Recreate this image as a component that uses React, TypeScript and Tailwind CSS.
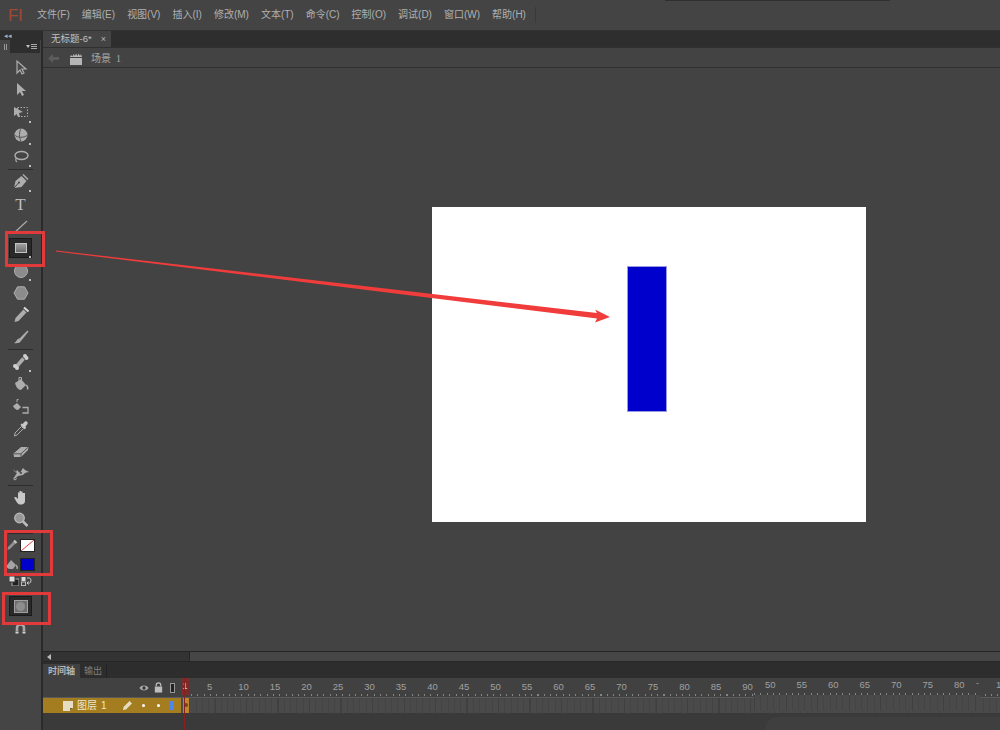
import type { ReactNode } from 'react'

const menus = ['文件(F)', '编辑(E)', '视图(V)', '插入(I)', '修改(M)', '文本(T)', '命令(C)', '控制(O)', '调试(D)', '窗口(W)', '帮助(H)']
const frames = [10, 15, 20, 25, 30, 35, 40, 45, 50, 55, 60, 65, 70, 75, 80, 85, 90]
const framesTwo = [50, 55, 60, 65, 70, 75, 80]

const Icon = ({ children }: { children: ReactNode }) => (
  <svg width="20" height="20" viewBox="0 0 20 20" fill="none">{children}</svg>
)

const Tool = ({ children, corner }: { children: ReactNode; corner?: boolean }) => (
  <div className="relative flex h-[22.2px] items-center justify-center">
    {children}
    {corner && <span className="absolute bottom-[1px] left-[29px] h-[2px] w-[2px] bg-[#bdbdbd]" />}
  </div>
)

const Sep = () => (
  <div className="flex h-[2.8px] items-center justify-center">
    <div className="h-[1px] w-[25px] bg-[#2c2c2c]" />
  </div>
)

const c = '#adadad'

const Toolbar = () => (
  <div className="flex w-[41px] flex-col pt-[2px]">
    <Tool>
      <Icon>
        <path d="M6 3v12l3-3 2 4 2-1-2-4h4z" stroke={c} strokeWidth="1.200" fill="#4a4a4a" />
      </Icon>
    </Tool>
    <Tool>
      <Icon>
        <path d="M6 3v12l3-3 2 4 2-1-2-4h4z" fill={c} />
      </Icon>
    </Tool>
    <Tool corner>
      <Icon>
        <path d="M3 5l9 5-4 1 1 4-2 0-1-3-3 2z" fill={c} />
        <rect x="6.500" y="5.500" width="10" height="9" stroke={c} strokeDasharray="1.500 1.500" />
      </Icon>
    </Tool>
    <Tool corner>
      <Icon>
        <circle cx="10" cy="10" r="6.500" fill={c} />
        <path d="M3.500 10c3 3 10 3 13 0M10 3.500c-2 3-2 9 0 13" stroke="#555" />
      </Icon>
    </Tool>
    <Tool corner>
      <Icon>
        <ellipse cx="10.500" cy="8.500" rx="6.500" ry="4" stroke={c} strokeWidth="1.400" />
        <path d="M5.500 11c-1 1-1 3 .5 4" stroke={c} strokeWidth="1.200" />
      </Icon>
    </Tool>
    <Sep />
    <Tool corner>
      <Icon>
        <path d="M3 16l1.500-7 6-5 5 5-5 6z" fill={c} />
        <path d="M3 16l4.500-5" stroke="#444" />
        <circle cx="8" cy="10.500" r="1" fill="#444" />
        <path d="M12 2.500l5 5" stroke={c} strokeWidth="1.500" />
      </Icon>
    </Tool>
    <Tool>
      <span className="font-[family-name:'Liberation_Serif',serif] text-[17px] leading-none text-[#bdbdbd]">T</span>
    </Tool>
    <Tool>
      <Icon>
        <path d="M3 17L16 5" stroke={c} strokeWidth="1.100" />
      </Icon>
    </Tool>
    <Tool corner>
      <div className="flex h-[20px] w-[23px] items-center justify-center border border-[#1b1b1b] bg-[#2a2a2a]">
        <div className="h-[10px] w-[12px] border border-[#c4c4c4] bg-gradient-to-b from-[#a0a0a0] to-[#6c6c6c]" />
      </div>
    </Tool>
    <Tool corner>
      <Icon>
        <circle cx="10" cy="10" r="6.500" fill="#8c8c8c" stroke={c} />
      </Icon>
    </Tool>
    <Tool>
      <Icon>
        <path d="M6.500 3.800h7l3.500 6.200-3.500 6.200h-7L3 10z" fill="#8c8c8c" stroke={c} />
      </Icon>
    </Tool>
    <Tool>
      <Icon>
        <path d="M3.500 17l1-4 8-8.500 3 3-8 8.500z" fill={c} />
        <path d="M13 2.500l4.500 4" stroke="#dcdcdc" strokeWidth="2" />
      </Icon>
    </Tool>
    <Tool>
      <Icon>
        <path d="M8 12L16.500 3.500l1 1L10 14z" fill={c} />
        <path d="M3 16c3 .5 6 0 7-2l-2-2.500c-2 0-2 3-5 4.500z" fill={c} />
      </Icon>
    </Tool>
    <Sep />
    <Tool corner>
      <Icon>
        <path d="M5.500 14.500l7-8" stroke={c} strokeWidth="3.500" />
        <circle cx="14" cy="4" r="2" fill="#d0d0d0" />
        <circle cx="15.500" cy="6" r="2" fill="#d0d0d0" />
        <circle cx="4" cy="14" r="2" fill="#d0d0d0" />
        <circle cx="6" cy="16" r="2" fill="#d0d0d0" />
      </Icon>
    </Tool>
    <Tool>
      <Icon>
        <path d="M4 9l6-4 5 6-5 5c-3 0-5-3-6-7z" fill={c} />
        <path d="M8 7V3.500h2.500V7" stroke={c} />
        <path d="M15 11c1.500 1 2 3 1.500 4.500" stroke={c} strokeWidth="1.500" />
      </Icon>
    </Tool>
    <Tool>
      <Icon>
        <path d="M2 9l4-3 4 4-3 3c-2 0-4-2-5-4z" fill={c} />
        <path d="M6 5V2.500h1.500" stroke={c} />
        <path d="M11.500 10.500h5.500v5.500h-5.500" stroke={c} strokeWidth="1.300" />
      </Icon>
    </Tool>
    <Tool>
      <Icon>
        <path d="M3.500 17l.5-3 6.500-6.500 2 2L6 16z" stroke={c} />
        <path d="M9.500 6l4.500 4.500 1-2-.5-1 2-2.500c1-1.500-1-3.500-2.500-2.500L11.500 5l-1-.5z" fill="#c8c8c8" />
      </Icon>
    </Tool>
    <Tool>
      <Icon>
        <path d="M2.500 12.500L10 6h7.500l-.5 3-7 7H3z" fill={c} />
        <path d="M3 12.800h7l7-6.500M10 12.800V16" stroke="#555" />
      </Icon>
    </Tool>
    <Tool>
      <Icon>
        <path d="M2 6l3 3 1-2 3 3 3-5 2 2 4 2c-2 0-3 1-4 1l-2 2-5 1-4 3 1-3 2-3-2-1z" fill={c} />
        <circle cx="4" cy="15.500" r="1.300" stroke={c} />
        <circle cx="10" cy="10" r="1" fill="#444" />
      </Icon>
    </Tool>
    <Sep />
    <Tool>
      <Icon>
        <path d="M3 9.500l2-.5 2 2V4.500h1.500V9V3h1.500v6V3.500h1.500V9.500V5H14v8c0 2-1.500 3.500-3.500 3.500H9c-2 0-3-2-6-7z" fill="#c8c8c8" />
      </Icon>
    </Tool>
    <Tool>
      <Icon>
        <circle cx="8.500" cy="8" r="4.800" fill="#979797" stroke="#bdbdbd" strokeWidth="1.200" />
        <path d="M12 11.500l4.500 4.500" stroke="#bdbdbd" strokeWidth="2.500" />
      </Icon>
    </Tool>
    <div className="mt-[2px] flex h-[1px] justify-center">
      <div className="h-[1px] w-[25px] bg-[#2c2c2c]" />
    </div>
    <div className="mt-[3px] flex h-[16px] items-center gap-[1px] pl-[5px]">
      <svg width="14" height="14" viewBox="0 0 14 14" fill="none">
        <path d="M2.500 12l.5-3 6-6 2 2-6 6z" fill="#909090" />
        <path d="M9 2.500l2.500 2.500" stroke="#c8c8c8" strokeWidth="2" />
      </svg>
      <div className="relative h-[13px] w-[15px] overflow-hidden border border-[#222] bg-white">
        <svg className="absolute inset-0 h-full w-full" viewBox="0 0 15 13" preserveAspectRatio="none">
          <path d="M0 13L15 0" stroke="#e02020" strokeWidth="1" />
        </svg>
      </div>
    </div>
    <div className="mt-[3px] flex h-[16px] items-center gap-[1px] pl-[5px]">
      <svg width="14" height="14" viewBox="0 0 14 14" fill="none">
        <path d="M1.500 9L6 3l5 5-3 4H5c-2 0-3-1-3.500-3z" fill="#a4a4a4" />
        <path d="M11 8c1 1 1.500 2.500 1 4" stroke="#a4a4a4" strokeWidth="1.500" />
      </svg>
      <div className="h-[13px] w-[15px] border border-[#222] bg-[#0000cc]" />
    </div>
    <div className="mt-[3px] flex h-[12px] items-center justify-center gap-[2px] pr-[1px]">
      <svg width="10" height="10" viewBox="0 0 10 10">
        <rect x="3" y="3" width="7" height="7" fill="#222" stroke="#aaa" />
        <rect x="0" y="0" width="6" height="6" fill="#ddd" stroke="#333" />
      </svg>
      <svg width="11" height="10" viewBox="0 0 11 10" fill="none">
        <rect x="0.500" y="1" width="4" height="4" fill="#ddd" />
        <rect x="0.500" y="6" width="4" height="3.500" stroke="#bbb" />
        <path d="M6 2h2.500c2 0 2 5 0 5H6M7.500 5.500L6 7l1.500 1.500" stroke="#ccc" />
      </svg>
    </div>
    <div className="mt-[9px] flex justify-center">
      <div className="flex h-[20px] w-[23px] items-center justify-center border border-[#1b1b1b] bg-[#2a2a2a]">
        <div className="flex h-[13px] w-[14px] items-center justify-center border border-[#a0a0a0] bg-[#6e6e6e]">
          <div className="h-[9px] w-[9px] rounded-full bg-[#8e8e8e]" />
        </div>
      </div>
    </div>
    <div className="mt-[6px] flex justify-center">
      <svg width="13" height="12" viewBox="0 0 13 12" fill="none">
        <path d="M3 9V6a3.500 3.500 0 017 0V9" stroke="#a8a8a8" strokeWidth="2.600" />
        <path d="M1.500 10.500h3M8.500 10.500h3" stroke="#d4d4d4" strokeWidth="1.800" />
      </svg>
    </div>
  </div>
)

const TimelineRuler = () => (
  <div className="relative h-[19px] bg-[#414141]">
    <div className="absolute left-[96px] top-[4px] flex items-center">
      <svg width="10" height="8" viewBox="0 0 12 9">
        <path d="M0.500 4.500C3 .5 9 .5 11.500 4.500 9 8.500 3 8.500.5 4.500z" fill="#b0b0b0" />
        <circle cx="6" cy="4.500" r="2" fill="#333" />
      </svg>
      <svg className="ml-[5px]" width="9" height="11" viewBox="0 0 9 12" fill="none">
        <path d="M2 5V3.500a2.500 2.500 0 015 0V5" stroke="#bdbdbd" strokeWidth="1.300" />
        <rect x="0.500" y="5" width="8" height="6.500" fill="#bdbdbd" />
      </svg>
      <div className="ml-[7px] h-[10px] w-[5px] border border-[#999] bg-[#222]" />
    </div>
    {/* playhead label */}
    <div className="absolute left-[138px] top-0 flex h-[17px] w-[8px] items-center justify-center bg-[#7c2b2b] text-[9px] text-[#d0d0d0]">1</div>
    <span className="absolute left-[164px] top-[2px] text-[9.500px] leading-[14px] text-[#a0a0a0]">5</span>
    <div className="absolute left-[184.750px] top-[2px] flex text-[9.500px] leading-[14px] text-[#a0a0a0]">
      {frames.map((f) => (
        <span key={f} className="w-[31.500px] text-center">{f}</span>
      ))}
    </div>
    <div className="absolute bottom-[1px] left-[148px] right-0 h-[2px] bg-[repeating-linear-gradient(90deg,#858585_0,#858585_1px,transparent_1px,transparent_6.300px)]" />
  </div>
)

const frameCells =
  'bg-[repeating-linear-gradient(90deg,#404040_0,#404040_1px,transparent_1px,transparent_31.500px),repeating-linear-gradient(90deg,#444444_0,#444444_1px,#4a4a4a_1px,#4a4a4a_6.300px)]'

const LayerRow = () => (
  <div className="flex h-[16px] border-t border-[#5a5a5a]">
    <div className="relative flex w-[138px] items-center bg-[#a37d1f] pl-[20px]">
      <svg width="10" height="10" viewBox="0 0 10 10">
        <path d="M0 0h10v7l-3 3H0z" fill="#e6dcc2" />
        <path d="M7 10V7h3z" fill="#7d6420" />
      </svg>
      <span className="ml-[4px] text-[10px] leading-none text-[#efe6cf]">图层</span>
      <span className="ml-[4px] text-[10px] leading-none text-[#efe6cf]">1</span>
      <svg className="absolute left-[79px] top-[2px]" width="11" height="11" viewBox="0 0 11 11">
        <path d="M1 10l.5-3 6-6 2.500 2.500-6 6z" fill="#e6dcc2" />
      </svg>
      <span className="absolute left-[99px] top-[6px] h-[3px] w-[3px] rounded-full bg-white" />
      <span className="absolute left-[114px] top-[6px] h-[3px] w-[3px] rounded-full bg-white" />
      <span className="absolute left-[127px] top-[3px] h-[9px] w-[4px] bg-[#4f86e8]" />
    </div>
    <div className="w-[2px] bg-[#4c4c4c]" />
    <div className={`relative flex-1 ${frameCells}`}>
      <div className="absolute left-0 top-0 h-full w-[6px] bg-[#c2852a]">
        <span className="absolute left-[1px] top-[5px] h-[4px] w-[4px] rounded-full bg-[#6a4a1a]" />
      </div>
    </div>
  </div>
)

export default function App() {
  return (
    <div className="relative flex h-[730px] w-[1000px] flex-col overflow-hidden bg-[#434343] font-[family-name:'Liberation_Sans','Noto_Sans_CJK_SC',sans-serif]">
      {/* top menu */}
      <div className="flex h-[31px] shrink-0 items-center border-b border-[#333] bg-[#444444]">
        <span className="ml-[8px] w-[29px] font-[family-name:'Liberation_Sans',sans-serif] text-[17px] leading-none text-[#a04a35]">Fl</span>
        <div className="flex gap-[12px]">
          {menus.map((m) => (
            <span key={m} className="text-[10px] leading-none text-[#b0b0b0]">{m}</span>
          ))}
        </div>
        <div className="ml-[9px] h-[16px] w-[1px] bg-[#393939]" />
      </div>

      <div className="flex min-h-0 flex-1">
        {/* tools */}
        <div className="flex w-[43px] shrink-0 flex-col border-r-2 border-[#2a2a2a] bg-[#454545]">
          <div className="flex h-[9px] items-center bg-[#2e2e2e] pl-[4px]">
            <span className="text-[7px] leading-none text-[#b0b0b0]">◂◂</span>
          </div>
          <div className="flex h-[15px] items-start">
            <div className="flex h-[10px] w-[10px] items-center justify-center">
              <div className="mt-[3px] h-[6px] w-[3px] border-x border-[#999]" />
            </div>
            <div className="flex h-[13px] w-[30px] items-center justify-end gap-[1px] bg-[#2e2e2e] pr-[3px]">
              <span className="h-0 w-0 border-x-[2px] border-t-[3px] border-x-transparent border-t-[#c0c0c0]" />
              <div className="flex flex-col gap-[1px]">
                <span className="h-[1px] w-[6px] bg-[#aaa]" />
                <span className="h-[1px] w-[6px] bg-[#aaa]" />
                <span className="h-[1px] w-[6px] bg-[#aaa]" />
              </div>
            </div>
          </div>
          <Toolbar />
        </div>

        <div className="flex min-w-0 flex-1 flex-col">
          {/* document tab */}
          <div className="flex h-[16px] shrink-0 bg-[#2e2e2e]">
            <div className="flex w-[68px] items-center bg-[#444] pl-[8px]">
              <span className="text-[9.500px] leading-none text-[#c0c0c0]">无标题-6*</span>
              <span className="ml-[9px] text-[9px] leading-none text-[#b5b5b5]">×</span>
            </div>
          </div>
          {/* scene bar */}
          <div className="flex h-[21px] shrink-0 items-center border-y border-[#303030] bg-[#434343] pl-[5px] pt-[2px]">
            <svg width="11" height="9" viewBox="0 0 11 9">
              <path d="M0 4.500L5 0v3h6v3H5v3z" fill="#5c5c5c" />
            </svg>
            <svg className="ml-[10px]" width="14" height="12" viewBox="0 0 14 12">
              <rect x="1" y="5" width="12" height="7" fill="#b5b5b5" />
              <path d="M1 4l1-2 1.500 1.500L4.500 1 6 3l1-2.500L8.500 3l1-2.500L11 3l1-2 1 3z" fill="#b5b5b5" />
            </svg>
            <span className="ml-[8px] text-[10px] leading-none text-[#a8a8a8]">场景</span>
            <span className="ml-[5px] font-[family-name:'Liberation_Serif',serif] text-[10px] leading-none text-[#a8a8a8]">1</span>
          </div>
          {/* stage */}
          <div className="min-h-0 flex-1 bg-[#434343] pl-[389px] pt-[139px]">
            <div className="h-[315px] w-[434px] bg-white pl-[195px] pt-[59px]">
              <div className="h-[146px] w-[40px] border border-[#9a9ae0] bg-[#0000cc]" />
            </div>
          </div>
          {/* horizontal scroll */}
          <div className="flex h-[11px] shrink-0 border-y border-[#262626]">
            <div className="flex w-[147px] items-center border-r border-[#262626] bg-[#333] pl-[4px]">
              <span className="h-0 w-0 border-y-[3px] border-r-[4px] border-y-transparent border-r-[#bbb]" />
            </div>
            <div className="flex-1 bg-[#464646]" />
          </div>
          {/* timeline */}
          <div className="relative flex h-[68px] shrink-0 flex-col bg-[#3a3a3a]">
            <div className="flex h-[16px] items-end bg-[#2d2d2d] pt-[2px]">
              <div className="flex h-[14px] w-[37px] items-center justify-center bg-[#414141] text-[9px] font-bold leading-none text-[#b5b5b5]">时间轴</div>
              <div className="flex h-[14px] w-[27px] items-center justify-center border-r border-[#222] text-[9px] leading-none text-[#808080]">输出</div>
            </div>
            <TimelineRuler />
            <LayerRow />
            <div className="absolute bottom-0 left-[141px] top-[16px] w-[1px] bg-[#8a1f1f]" />

            {/* pasted strip over the far end of the ruler */}
            <div className="absolute left-[711px] top-[16px] h-[33px] w-[227px] bg-[#414141]">
              <div className="relative h-[17px]">
                <div className="absolute left-[0.500px] top-0 flex text-[9.500px] leading-[14px] text-[#a0a0a0]">
                  {framesTwo.map((f) => (
                    <span key={f} className="w-[31.500px] text-center">{f}</span>
                  ))}
                </div>
                <div className="absolute bottom-0 left-0 right-0 h-[2px] bg-[repeating-linear-gradient(90deg,#858585_0,#858585_1px,transparent_1px,transparent_6.300px)]" />
              </div>
              <div className={`h-[16px] ${frameCells}`} />
            </div>
            <span className="absolute left-[933px] top-[17px] text-[9px] leading-none text-[#a0a0a0]">-</span>
            <span className="absolute left-[953px] top-[18px] text-[9.500px] leading-none text-[#a0a0a0]">1</span>
            <div className="absolute bottom-0 right-0 h-[13px] w-[235px] rounded-tl-[12px] bg-[#3f3f3f]" />
          </div>
        </div>
      </div>

      {/* annotations */}
      <div className="absolute left-[5px] top-[231px] h-[36px] w-[40px] border-[3px] border-[#e23a3a]" />
      <div className="absolute left-[4px] top-[530px] h-[46px] w-[49px] border-[3px] border-[#e23a3a]" />
      <div className="absolute left-[2px] top-[592px] h-[33px] w-[49px] border-[3px] border-[#e23a3a]" />
      <svg className="absolute left-0 top-0" width="1000" height="730" viewBox="0 0 1000 730">
        <path d="M56 250.500L597 313 595 309.500 610 317 595 322.500 597 318.500 56 251.500z" fill="#f13c3c" />
      </svg>
      <div className="absolute left-[665px] top-0 h-[1px] w-[225px] bg-[#2f2f2f]" />
    </div>
  )
}
